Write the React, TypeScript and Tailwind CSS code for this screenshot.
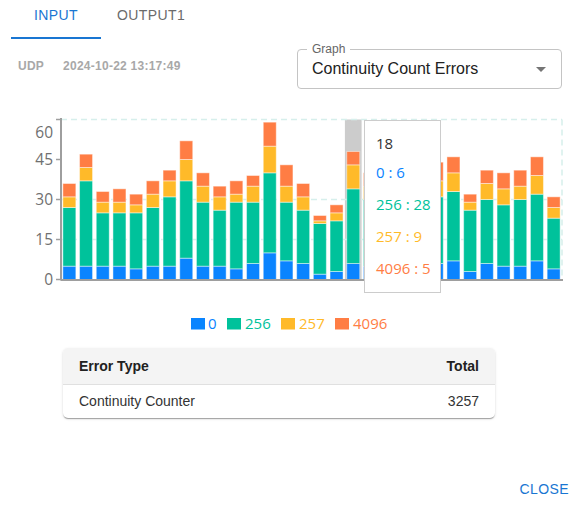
import React from "react";

const C = { blue: "#0a84ff", green: "#00c29b", yellow: "#ffba29", orange: "#ff7d44" };
const COLORS = [C.blue, C.green, C.yellow, C.orange];

const data: number[][] = [
  [5, 22, 4, 5], [5, 32, 5, 5], [5, 20, 4, 4], [5, 20, 4, 5], [4, 21, 3, 4], [5, 22, 5, 5],
  [5, 26, 6, 4], [8, 29, 8, 7], [5, 24, 6, 5], [5, 21, 5, 4], [4, 25, 3, 5], [6, 23, 6, 4],
  [10, 30, 10, 9], [7, 22, 6, 8], [6, 20, 5, 5], [2, 19, 1, 2], [3, 19, 3, 3], [6, 28, 9, 5],
  [5, 25, 5, 5], [4, 22, 4, 5], [6, 26, 5, 4], [5, 24, 6, 5], [6, 25, 6, 7], [7, 26, 7, 6],
  [3, 23, 3, 3], [6, 24, 6, 5], [5, 23, 6, 6], [5, 25, 5, 6], [7, 25, 7, 7], [4, 19, 4, 4],
];

const X0 = 61;
const X1 = 562;
const BASE = 279.5;
const CAT = (X1 - X0) / data.length;
const yOf = (v: number) => BASE - (v * 8) / 3;

function Chart() {
  const font = "'Open Sans', 'Liberation Sans', sans-serif";
  return (
    <div className="relative h-[232px]">
      <svg width={580} height={232} viewBox="0 105 580 232" className="block">
        {/* hover shade */}
        <rect x={X0 + 17 * CAT} y={119.5} width={CAT} height={BASE - 119.5} fill="#cccccc" />
        {/* grid */}
        {[15, 30].map((v) => (
          <line key={v} x1={X0} x2={X1} y1={yOf(v)} y2={yOf(v)} stroke="#d6efec" strokeWidth={1.5} strokeDasharray="6 4" />
        ))}
        <line x1={X0} x2={X1} y1={119.5} y2={119.5} stroke="#d6efec" strokeWidth={1.5} strokeDasharray="6 4" />
        <line x1={X1} x2={X1} y1={119.5} y2={BASE} stroke="#d6efec" strokeWidth={1.5} strokeDasharray="6 4" />
        {/* bars */}
        {data.map((d, i) => {
          let acc = 0;
          const x = X0 + i * CAT + 1.85;
          return (
            <g key={i}>
              {d.map((v, k) => {
                const y1 = yOf(acc);
                acc += v;
                const y2 = yOf(acc);
                return (
                  <rect
                    key={k}
                    x={x}
                    y={y2}
                    width={13}
                    height={y1 - y2}
                    fill={COLORS[k]}
                    stroke="#ffffff"
                    strokeOpacity={0.45}
                    strokeWidth={1}
                  />
                );
              })}
            </g>
          );
        })}
        {/* axes */}
        <line x1={X0} x2={X0} y1={118} y2={280.5} stroke="#9e9e9e" strokeWidth={2} />
        <line x1={X0} x2={X1 + 1} y1={280} y2={280} stroke="#9e9e9e" strokeWidth={2} />
        {[0, 15, 30, 45, 60].map((v) => (
          <g key={v}>
            <line x1={56} x2={X0} y1={yOf(v)} y2={yOf(v)} stroke="#9e9e9e" strokeWidth={1.5} />
            <text
              x={53}
              y={(v === 60 ? 132 : yOf(v)) + 5.5}
              textAnchor="end"
              fontSize={15.5}
              fill="#707070"
              fontFamily={font}
            >
              {v}
            </text>
          </g>
        ))}
        {/* legend */}
        {[
          { rx: 191, tx: 208, label: "0", c: C.blue },
          { rx: 227, tx: 245, label: "256", c: C.green },
          { rx: 281, tx: 299, label: "257", c: C.yellow },
          { rx: 335, tx: 353, label: "4096", c: C.orange },
        ].map((l) => (
          <g key={l.label}>
            <rect x={l.rx} y={318} width={14} height={11.5} fill={l.c} />
            <text x={l.tx} y={329} fontSize={15} fill={l.c} fontFamily={font}>
              {l.label}
            </text>
          </g>
        ))}
      </svg>
      {/* tooltip */}
      <div className="absolute left-[364px] top-[15px] w-[77px] h-[173px] bg-white border border-[#cccccc] pl-[11px] pt-[12px] font-['Open_Sans',sans-serif] text-[15px]">
        <div className="leading-[20px] text-[#333333]">18</div>
        <div className="mt-[3px] leading-[32px] text-[#0a84ff] whitespace-pre">0 : 6</div>
        <div className="leading-[32px] text-[#00c29b] whitespace-pre">256 : 28</div>
        <div className="leading-[32px] text-[#ffba29] whitespace-pre">257 : 9</div>
        <div className="leading-[32px] text-[#ff7d44] whitespace-pre">4096 : 5</div>
      </div>
    </div>
  );
}

export default function App() {
  return (
    <div className="relative w-[580px] h-[506px] bg-white overflow-hidden font-['Liberation_Sans',Arial,sans-serif]">
      {/* tabs */}
      <div className="flex pl-[11px] h-[39px]">
        <div className="min-w-[90px] px-4 h-[39px] pt-[6px] border-b-2 border-[#1976d2] text-center text-[14px] tracking-[0.4px] leading-[18px] text-[#1976d2]">
          INPUT
        </div>
        <div className="min-w-[90px] px-4 h-[39px] pt-[6px] text-center text-[14px] tracking-[0.4px] leading-[18px] text-[#6b6b6b]">
          OUTPUT1
        </div>
      </div>
      {/* info row */}
      <div className="flex justify-between items-start h-[66px]">
        <div className="pl-[18px] pt-[19px] flex gap-[19px] text-[12px] font-bold tracking-[0.25px] leading-[16px] text-[#a8a8a8]">
          <span>UDP</span>
          <span>2024-10-22 13:17:49</span>
        </div>
        <div className="relative mt-[10px] mr-[18px] w-[265px] h-[40px] rounded-[4px] border border-[#c4c4c4] flex items-center pl-[14px] pr-[8px]">
          <span className="absolute left-[9px] top-[-9px] bg-white px-[5px] text-[12px] leading-[16px] text-[#666666]">
            Graph
          </span>
          <span className="flex-1 text-[16px] leading-[20px] text-[#212121]">Continuity Count Errors</span>
          <svg width={24} height={24} viewBox="0 0 24 24">
            <path d="M7 10l5 5 5-5z" fill="#757575" />
          </svg>
        </div>
      </div>
      <Chart />
      {/* table */}
      <div className="mt-[11px] ml-[63px] w-[432px] rounded-[5px] bg-white overflow-hidden shadow-[0px_2px_1px_-1px_rgba(0,0,0,0.2),0px_1px_1px_0px_rgba(0,0,0,0.14),0px_1px_3px_0px_rgba(0,0,0,0.12)]">
        <div className="flex justify-between items-center h-[37px] px-4 bg-[#f4f4f4] border-b border-[#e0e0e0] text-[14px] font-bold text-[#212121]">
          <span>Error Type</span>
          <span>Total</span>
        </div>
        <div className="flex justify-between items-center h-[33px] px-4 text-[14px] text-[#333333]">
          <span>Continuity Counter</span>
          <span>3257</span>
        </div>
      </div>
      {/* close */}
      <div className="flex justify-end mt-[53px] pr-[3px]">
        <button className="h-[37px] px-2 text-[14px] tracking-[0.4px] text-[#1976d2]">CLOSE</button>
      </div>
    </div>
  );
}
